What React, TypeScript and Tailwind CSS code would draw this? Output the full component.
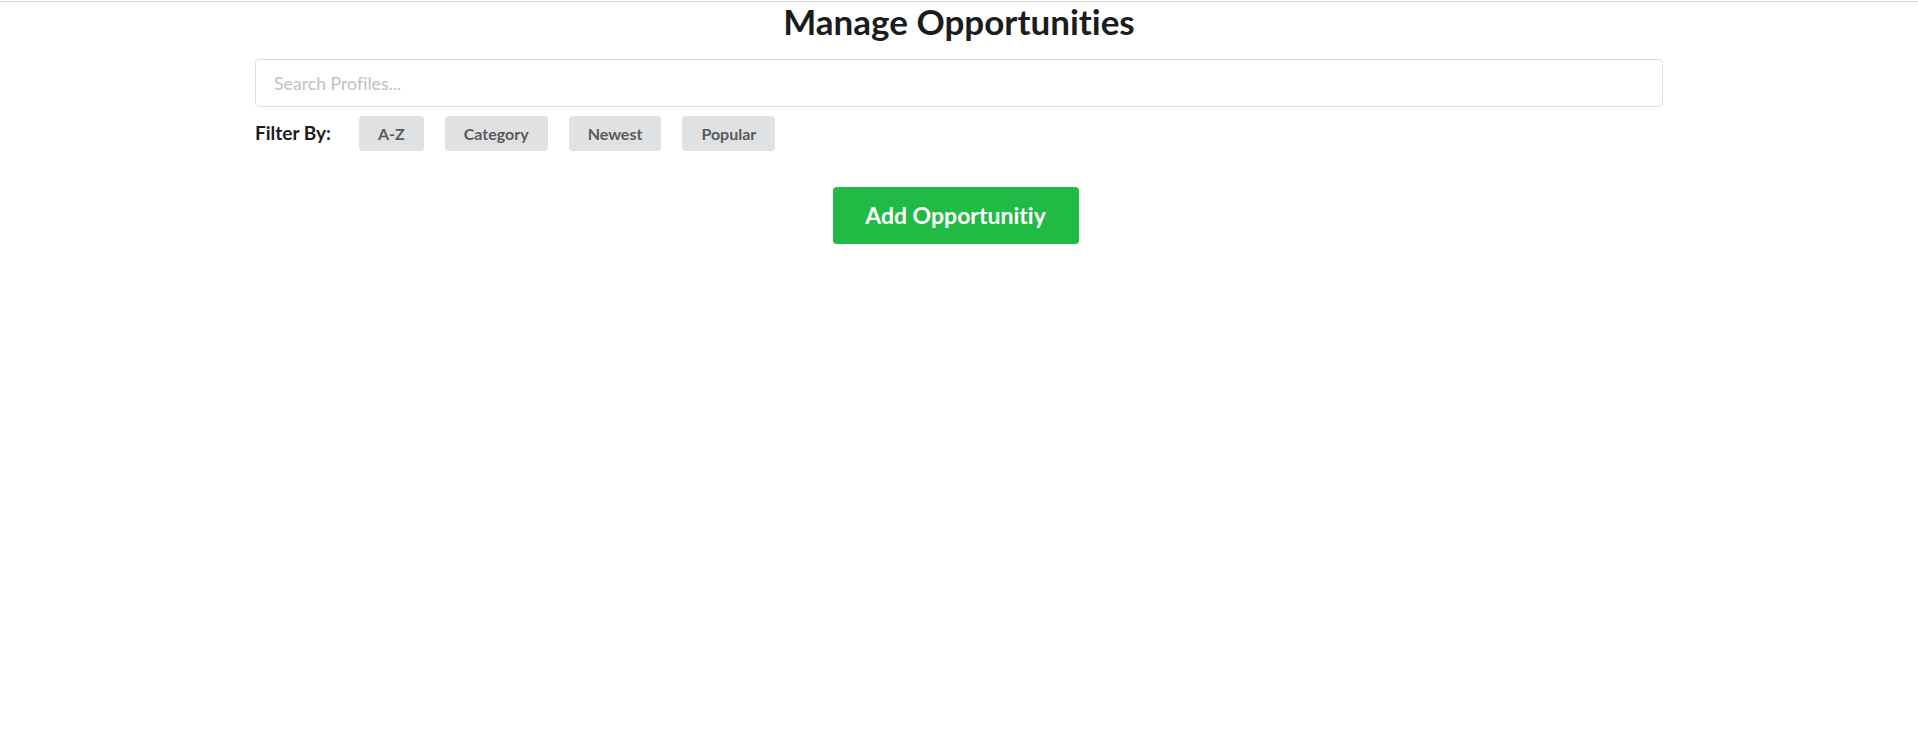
import React from "react";

export default function App() {
  const filters = ["A-Z", "Category", "Newest", "Popular"];
  return (
    <div className="min-h-[733px] bg-white font-['Lato','Noto_Sans',sans-serif] text-[#1b1c1d] [font-variant-ligatures:none]">
      <div className="pt-px">
        <div className="h-px bg-[#d4d4d5]" />
      </div>
      <h1 className="text-center text-[35px] font-bold leading-[38px] text-[#1b1c1d]">
        Manage Opportunities
      </h1>
      <div className="mx-auto w-[1408px] pt-[19px]">
        <input
          type="text"
          placeholder="Search Profiles..."
          className="block h-[48px] w-full rounded-[4px] border border-[#dedede] bg-white pl-[18px] text-[17.7px] text-[#1b1c1d] outline-none placeholder:text-[#bfbfbf] [font-variant-ligatures:none]"
        />
        <div className="mt-[9px] flex items-center">
          <span className="mr-[28px] text-[19px] font-bold text-[#1b1c1d]">
            Filter By:
          </span>
          <div className="flex gap-[21px]">
            {filters.map((f) => (
              <button
                key={f}
                className="h-[35px] rounded-[4px] bg-[#e0e1e2] px-[19px] text-[16px] font-bold text-[#5a5a5a] [font-variant-ligatures:none]"
              >
                {f}
              </button>
            ))}
          </div>
        </div>
      </div>
      <div className="mt-[36px] flex justify-center">
        <button className="-ml-[7px] h-[57px] w-[246px] rounded-[4px] bg-[#21ba45] text-[23px] font-bold text-white [font-variant-ligatures:none]">
          Add Opportunitiy
        </button>
      </div>
    </div>
  );
}
